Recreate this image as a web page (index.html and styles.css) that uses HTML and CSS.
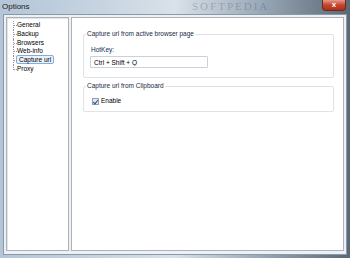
FILE: index.html
```html
<!DOCTYPE html>
<html lang="en">
<head>
	<meta charset="UTF-8">
	<title>Options</title>
	<link rel="stylesheet" href="styles.css">
</head>
<body>
	<div class="window">
		<div class="titlebar">
			<span class="title">Options</span>
			<span class="mark">SOFTPEDIA</span>
			<a class="close" href="javascript:;">x</a>
		</div>
		<div class="frame">
			<ul class="tree">
				<li>General</li>
				<li>Backup</li>
				<li>Browsers</li>
				<li>Web-info</li>
				<li class="sel"><span>Capture url</span></li>
				<li class="last">Proxy</li>
			</ul>
			<div class="page">
				<fieldset class="group">
					<legend>Capture url from active browser page</legend>
					<p class="label">HotKey:</p>
					<input type="text" class="text" value="Ctrl + Shift + Q" />
				</fieldset>
				<fieldset class="group">
					<legend>Capture url from Clipboard</legend>
					<label class="check">
						<i class="box"></i>
						Enable
					</label>
				</fieldset>
			</div>
		</div>
	</div>
</body>
</html>
```
FILE: styles.css
```css
*{
	box-sizing: border-box;
}

body{
	margin: 0;
	font-family: "Liberation Sans", Arial, sans-serif;
	font-size: 6.5px;
	line-height: 8px;
	color: #000;
}

.window{
	width: 350px;
	height: 258px;
	display: flex;
	flex-direction: column;
	background: linear-gradient(90deg, #b3c5d8 0, #c8d5e1 30%, #d9e1e9 50%, #98a7b6 75%, #5b6874 100%);
	overflow: hidden;
}

.titlebar{
	height: 14px;
	position: relative;
	display: flex;
	align-items: center;
	padding-left: 2px;
}

.title{
	font-size: 8px;
	color: #1a1a1a;
}

.mark{
	position: absolute;
	left: 192px;
	top: 0;
	font-family: "Liberation Serif", serif;
	font-size: 11px;
	line-height: 12px;
	letter-spacing: 2px;
	color: rgba(60, 80, 100, 0.3);
}

.close{
	position: absolute;
	right: 4px;
	top: 0;
	width: 24px;
	height: 11px;
	border: 1px solid #6b2a22;
	border-top: 0;
	border-radius: 0 0 4px 4px;
	background: linear-gradient(#e49a88, #c4452f 50%, #b02f1c);
	color: #fff;
	font-size: 8px;
	font-weight: bold;
	text-align: center;
	line-height: 9px;
	text-decoration: none;
}

.frame{
	flex: 1;
	margin: 0 3px 3px 3px;
	padding: 2px 2px 3px 2px;
	background: #eef1f4;
	border: 1px solid #8a99a8;
	display: flex;
	gap: 2px;
}

.tree{
	width: 63px;
	margin: 0;
	padding: 3px 0 0 6px;
	list-style: none;
	background: #fff;
	border: 1px solid #adb2b8;
	box-shadow: inset 1px 1px 0 #e2e5e8;
}

.tree li{
	height: 8.8px;
	line-height: 8.8px;
	padding-left: 3px;
	border-left: 1px dotted #999;
	position: relative;
	white-space: nowrap;
}

.tree li::before{
	content: "";
	position: absolute;
	left: 0;
	top: 4px;
	width: 3px;
	border-top: 1px dotted #999;
}

.tree li.last{
	border-left-color: transparent;
}

.tree li.last::after{
	content: "";
	position: absolute;
	left: -1px;
	top: 0;
	height: 5px;
	border-left: 1px dotted #999;
}

.tree .sel span{
	margin-left: -1px;
	padding: 0 2px;
	background: #eaf3fc;
	border: 1px solid #84acdd;
	border-radius: 2px;
}

.page{
	flex: 1;
	background: #fff;
	border: 1px solid #adb2b8;
	padding: 12px 9px 0 11px;
	display: flex;
	flex-direction: column;
	gap: 4px;
}

.group{
	margin: 0;
	padding: 8px 6px 9px 6px;
	border: 1px solid #dfe3e8;
	border-radius: 2px;
}

.group legend{
	padding: 0 1px;
	margin-left: -4px;
	color: #1a2a40;
}

.label{
	margin: 0 0 2px 1px;
	color: #0a2a5a;
}

.text{
	display: block;
	width: 118px;
	height: 12px;
	padding: 0 3px;
	font-family: "Liberation Sans", Arial, sans-serif;
	font-size: 6.5px;
	border: 1px solid #c9d1da;
	border-radius: 1px;
}

.check{
	display: flex;
	align-items: center;
	gap: 2px;
	margin-top: -1px;
	margin-bottom: -3px;
	margin-left: 2px;
}

.box{
	display: inline-block;
	width: 7px;
	height: 7px;
	border: 1px solid #8e9fb4;
	background: #dde8f4;
	position: relative;
}

.box::after{
	content: "";
	position: absolute;
	left: 1px;
	top: 0;
	width: 2px;
	height: 4px;
	border: solid #2a4a8a;
	border-width: 0 1px 1px 0;
	transform: rotate(40deg);
}
```
